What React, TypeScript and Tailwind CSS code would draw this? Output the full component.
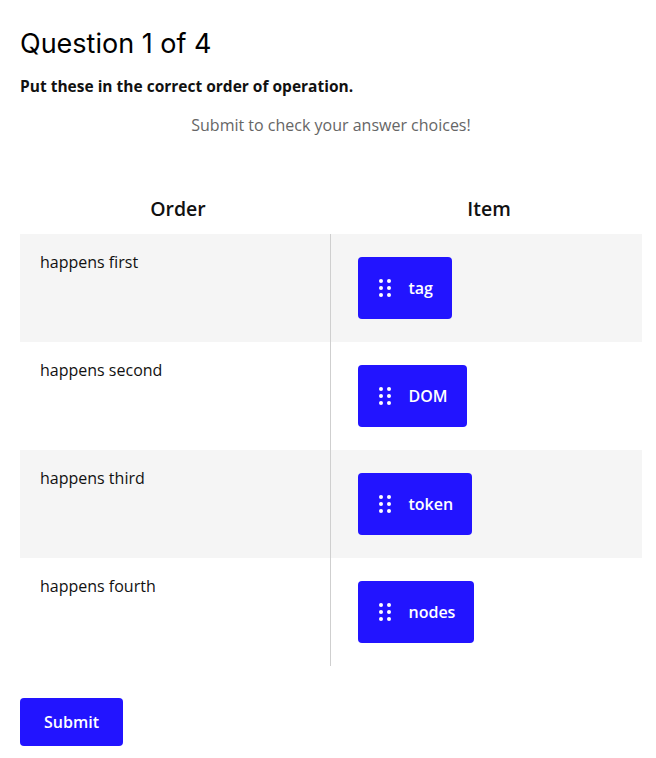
const rows = [
  { label: "happens first", item: "tag" },
  { label: "happens second", item: "DOM" },
  { label: "happens third", item: "token" },
  { label: "happens fourth", item: "nodes" },
];

function GripIcon() {
  return (
    <svg width="12" height="18" viewBox="0 0 12 18" className="shrink-0" aria-hidden="true">
      {[2, 9, 16].map((cy) => (
        <g key={cy} fill="white">
          <circle cx="2" cy={cy} r="2" />
          <circle cx="10" cy={cy} r="2" />
        </g>
      ))}
    </svg>
  );
}

export default function App() {
  return (
    <div className="min-h-[758px] bg-white pl-5 pt-[26px] font-['Open_Sans',sans-serif] text-[#111]">
      <h1 className="font-['Inter',sans-serif] text-[27px] font-normal leading-9 text-black">Question 1 of 4</h1>
      <p className="mt-[12px] text-[15.5px] font-bold leading-6">Put these in the correct order of operation.</p>
      <p className="mt-[15px] w-[622px] text-center text-[16px] leading-6 text-[#666]">
        Submit to check your answer choices!
      </p>

      <table className="mt-[51px] w-[622px] border-collapse">
        <thead>
          <tr>
            <th className="h-[46px] w-[310px] pb-1 pl-1.5 text-center text-[19.5px] font-semibold">Order</th>
            <th className="h-[46px] pb-1 pl-1.5 text-center text-[19.5px] font-semibold">Item</th>
          </tr>
        </thead>
        <tbody>
          {rows.map(({ label, item }, i) => (
            <tr key={label} className={i % 2 === 0 ? "bg-[#f5f5f5]" : "bg-white"}>
              <td className="h-[108px] border-r border-[#cfcfcf] px-5 pt-[16px] align-top text-[16px] leading-6">
                {label}
              </td>
              <td className="h-[108px] pl-[27px] pt-[23px] align-top">
                <button className="flex h-[62px] items-center gap-[18px] rounded-[4px] bg-[#2214ff] pl-[21px] pr-[19px] text-[16px] font-semibold text-white">
                  <GripIcon />
                  {item}
                </button>
              </td>
            </tr>
          ))}
        </tbody>
      </table>

      <button className="mt-8 h-12 rounded-[4px] bg-[#2214ff] px-6 text-[16px] font-semibold text-white">Submit</button>
    </div>
  );
}
